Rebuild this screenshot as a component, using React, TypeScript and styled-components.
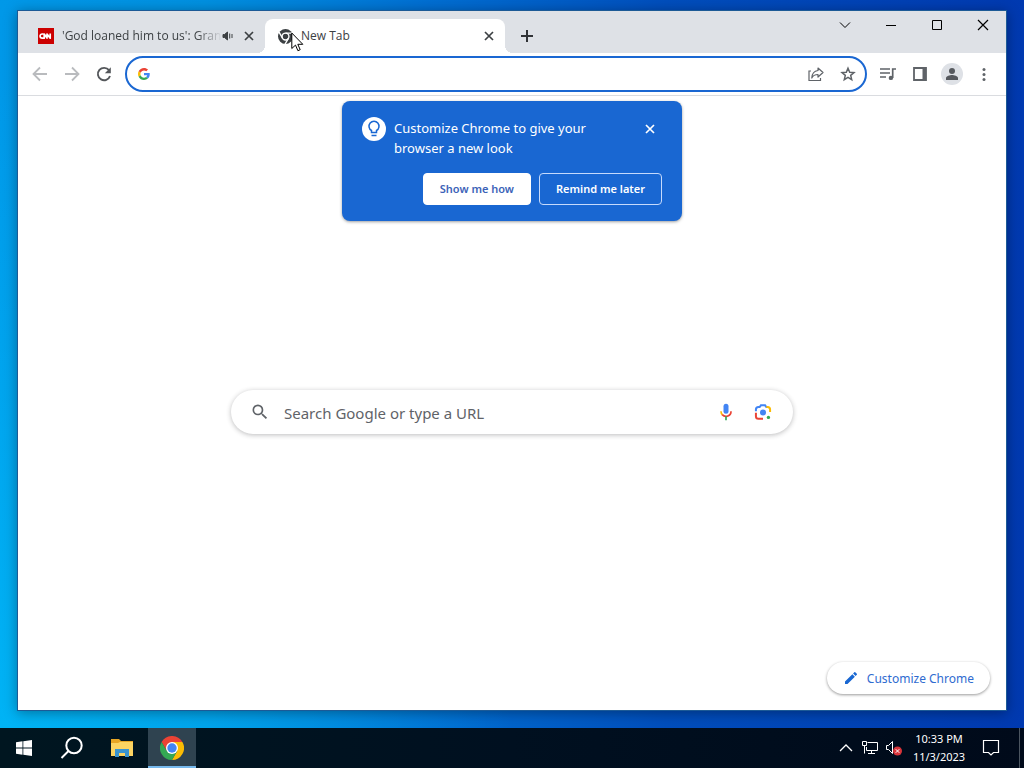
import React from 'react';
import styled, { createGlobalStyle } from 'styled-components';

const Global = createGlobalStyle`
  *, *::before, *::after { box-sizing: border-box; }
  body { margin: 0; font-family: "Open Sans", "Noto Sans", sans-serif; color: #3c4043; }
  button { font: inherit; color: inherit; border: 0; padding: 0; margin: 0; background: none; }
  svg { display: block; flex: none; }
`;

const Desktop = styled.div`
  position: relative;
  display: flex;
  flex-direction: column;
  min-height: 100vh;
  background:
    radial-gradient(ellipse 50% 90% at 0% 100%, rgba(0, 200, 255, 0.6), rgba(0, 200, 255, 0)),
    linear-gradient(90deg, #0098e8 0%, #0090e0 20%, #006ed2 42%, #004ebc 65%, #0039b0 100%);
`;

const BrowserWindow = styled.main`
  flex: 1;
  display: flex;
  flex-direction: column;
  margin: 10px 17px 17px;
  border: 1px solid #1c5a96;
  background: #fff;
  box-shadow: 0 2px 12px rgba(0, 0, 0, 0.35);
`;

const TabStrip = styled.header`
  display: flex;
  height: 42px;
  padding-left: 7px;
  background: #dee1e6;
`;

const Tab = styled.div<{ $active?: boolean }>`
  position: relative;
  display: flex;
  align-items: center;
  align-self: flex-end;
  width: 240px;
  height: 34px;
  padding: 0 8px 0 13px;
  border-radius: 8px 8px 0 0;
  background: ${p => (p.$active ? '#fff' : 'transparent')};
  font-size: 12px;
  &::before, &::after {
    content: '';
    display: ${p => (p.$active ? 'block' : 'none')};
    position: absolute;
    bottom: 0;
    width: 8px;
    height: 8px;
  }
  &::before { right: 100%; background: radial-gradient(circle at 0 0, transparent 8px, #fff 8px); }
  &::after { left: 100%; background: radial-gradient(circle at 100% 0, transparent 8px, #fff 8px); }
`;

const TabTitle = styled.span<{ $fade?: boolean }>`
  flex: 1;
  min-width: 0;
  margin-left: 8px;
  overflow: hidden;
  white-space: nowrap;
  line-height: 16px;
  mask-image: ${p => (p.$fade ? 'linear-gradient(90deg, #000 84%, transparent)' : 'none')};
`;

const SpeakerIcon = styled.svg`
  margin-right: 7px;
`;

const IconButton = styled.button<{ $w?: number; $h?: number }>`
  display: flex;
  align-items: center;
  justify-content: center;
  flex: none;
  width: ${p => p.$w ?? 32}px;
  height: ${p => p.$h ?? 32}px;
`;

const NewTab = styled(IconButton)`
  align-self: flex-end;
  margin-left: 7px;
`;

const WindowControls = styled.div`
  display: flex;
  margin-left: auto;
  color: #000;
`;

const Toolbar = styled.nav`
  display: flex;
  align-items: center;
  height: 43px;
  padding: 0 6px;
  border-bottom: 1px solid #dadce0;
  color: #5f6368;
`;

const Omnibox = styled.label`
  display: flex;
  flex: 1;
  align-items: center;
  height: 36px;
  margin: 0 5px;
  padding: 0 1px 0 11px;
  border: 2px solid #1a67d2;
  border-radius: 18px;
`;

const TextInput = styled.input<{ $size: number }>`
  flex: 1;
  min-width: 0;
  border: 0;
  outline: 0;
  padding: 2px 0 0;
  background: none;
  font-family: "Noto Sans", "Open Sans", sans-serif;
  font-size: ${p => p.$size}px;
  color: #3c4043;
  &::placeholder { color: #5f6368; opacity: 1; }
`;

const Avatar = styled.span`
  display: flex;
  align-items: center;
  justify-content: center;
  width: 22px;
  height: 22px;
  border-radius: 50%;
  background: #dee1e6;
`;

const Page = styled.section`
  flex: 1;
  display: flex;
  flex-direction: column;
  align-items: center;
  padding: 5px 16px 16px;
`;

const Promo = styled.aside`
  display: flex;
  flex-direction: column;
  justify-content: space-between;
  width: 340px;
  height: 120px;
  padding: 16px 20px;
  border-radius: 8px;
  background: #1967d2;
  color: #fff;
  font-family: "Noto Sans", "Open Sans", sans-serif;
  box-shadow: 0 1px 3px rgba(60, 64, 67, 0.5);
`;

const PromoHead = styled.div`
  display: flex;
  gap: 8px;
`;

const BulbBadge = styled.span`
  display: flex;
  align-items: center;
  justify-content: center;
  width: 24px;
  height: 24px;
  border-radius: 50%;
  background: #fff;
  color: #1967d2;
`;

const PromoText = styled.p`
  flex: 1;
  margin: 1px 0 0;
  padding-right: 24px;
  font-size: 13px;
  line-height: 20px;
`;

const PromoActions = styled.div`
  display: flex;
  justify-content: flex-end;
  gap: 8px;
`;

const PromoButton = styled.button<{ $filled?: boolean }>`
  height: 32px;
  padding: 0 16px 2px;
  border: 1px solid ${p => (p.$filled ? '#fff' : '#c6dafc')};
  border-radius: 4px;
  background: ${p => (p.$filled ? '#fff' : 'transparent')};
  color: ${p => (p.$filled ? '#3c63b8' : '#fff')};
  font-size: 11px;
  font-weight: 600;
`;

const SearchBox = styled.label`
  display: flex;
  align-items: center;
  width: 100%;
  max-width: 562px;
  height: 44px;
  margin-top: 169px;
  padding: 0 12px 0 19px;
  border-radius: 22px;
  background: #fff;
  box-shadow: 0 1px 5px rgba(32, 33, 36, 0.3);
  gap: 14px;
`;

const SearchActions = styled.span`
  display: flex;
  gap: 1px;
`;

const CustomizeButton = styled.button`
  display: flex;
  align-items: center;
  gap: 8px;
  height: 32px;
  margin-top: auto;
  align-self: flex-end;
  padding: 0 16px;
  border-radius: 16px;
  background: #fff;
  color: #2f6bd0;
  font-family: "Noto Sans", "Open Sans", sans-serif;
  font-size: 12px;
  box-shadow: 0 1px 3px rgba(0, 0, 0, 0.4);
`;

const Taskbar = styled.footer`
  display: flex;
  align-items: stretch;
  height: 40px;
  background: linear-gradient(90deg, #001620, #001020 50%, #000a1a);
  color: #fff;
`;

const TaskButton = styled.button<{ $active?: boolean }>`
  display: flex;
  align-items: center;
  justify-content: center;
  width: 48px;
  background: ${p => (p.$active ? '#2f4350' : 'transparent')};
  box-shadow: ${p => (p.$active ? 'inset 0 -2px #76b9ed' : 'none')};
`;

const TaskGroup = styled.div`
  display: flex;
  gap: 2px;
  padding-left: 2px;
`;

const Tray = styled.div`
  display: flex;
  align-items: center;
  margin-left: auto;
`;

const Clock = styled.time`
  width: 66px;
  font-family: "Noto Sans", "Open Sans", sans-serif;
  font-size: 11px;
  line-height: 18px;
  text-align: center;
  white-space: nowrap;
`;

const ShowDesktop = styled.button`
  align-self: stretch;
  width: 5px;
  margin-left: 9px;
  border-left: 1px solid #4b5560;
`;

const Pointer = styled.svg`
  position: absolute;
  left: 291px;
  top: 32px;
`;

const Close = () => (
  <svg width="16" height="16" viewBox="0 0 16 16" fill="none" stroke="currentColor" strokeWidth="1.7">
    <path d="M4 4l8 8M12 4l-8 8" />
  </svg>
);

const GoogleG = () => (
  <svg width="12" height="12" viewBox="0 0 48 48">
    <path fill="#EA4335" d="M24 9.500c3.500 0 6.700 1.200 9.200 3.600l6.900-6.900C35.900 2.400 30.500 0 24 0 14.600 0 6.500 5.400 2.600 13.200l8 6.200C12.400 13.700 17.700 9.500 24 9.500z" />
    <path fill="#4285F4" d="M47 24.600c0-1.600-.2-3.100-.4-4.600H24v9h12.900c-.6 3-2.200 5.500-4.700 7.200l7.700 6C44.400 38 47 31.800 47 24.600z" />
    <path fill="#FBBC05" d="M10.500 28.600c-.5-1.500-.8-3-.8-4.600s.3-3.100.8-4.600l-8-6.200C.9 16.500 0 20.100 0 24s.9 7.500 2.600 10.800l7.900-6.200z" />
    <path fill="#34A853" d="M24 48c6.500 0 11.900-2.100 15.900-5.800l-7.700-6c-2.200 1.500-4.900 2.300-8.200 2.300-6.300 0-11.600-4.200-13.500-9.900l-8 6.200C6.500 42.600 14.600 48 24 48z" />
  </svg>
);

const ChromeLogo = () => (
  <svg width="24" height="24" viewBox="0 0 24 24">
    <path fill="#EA4335" d="M1.600 6L6.800 15 12 6h10.400A12 12 0 0 0 1.600 6z" />
    <path fill="#FBBC04" d="M22.400 6H12l5.200 9L12 24A12 12 0 0 0 22.400 6z" />
    <path fill="#34A853" d="M12 24l5.200-9H6.800L1.600 6A12 12 0 0 0 12 24z" />
    <circle cx="12" cy="12" r="6" fill="#fff" />
    <circle cx="12" cy="12" r="4.700" fill="#4285F4" />
  </svg>
);

const ChromeMono = () => (
  <svg width="15" height="15" viewBox="0 0 24 24">
    <circle cx="12" cy="12" r="12" fill="#3c4043" />
    <g fill="none" stroke="#fff" strokeWidth="2.200">
      <circle cx="12" cy="12" r="5.500" />
      <path d="M12 6.500h12M7.200 14.700L1.200 4.300M16.800 14.700l-6 10.400" />
    </g>
  </svg>
);

export default function App() {
  return (
    <Desktop>
      <Global />
      <BrowserWindow>
        <TabStrip>
          <Tab>
            <svg width="16" height="16" viewBox="0 0 16 16">
              <path fill="#c00" d="M0 0h16v16H0z" />
              <path d="M5.500 6H4.200a2 2 0 0 0 0 4.200H6.200V6l2.800 4V6l3.200 4.200V5.500" fill="none" stroke="#fff" strokeWidth="1.700" strokeLinejoin="round" />
            </svg>
            <TabTitle $fade>'God loaned him to us': Gran</TabTitle>
            <SpeakerIcon width="12" height="16" viewBox="2 0 12 16" fill="none" stroke="#3c4043">
              <path d="M3 6.500h1.500l3-2.500v8l-3-2.500H3z" fill="#3c4043" />
              <path d="M9.700 5.500v5M12 6v4" />
            </SpeakerIcon>
            <IconButton $w={16} $h={16} aria-label="Close tab"><Close /></IconButton>
          </Tab>
          <Tab $active>
            <ChromeMono />
            <TabTitle>New Tab</TabTitle>
            <IconButton $w={16} $h={16} aria-label="Close tab"><Close /></IconButton>
          </Tab>
          <NewTab $w={30} $h={34} aria-label="New tab">
            <svg width="16" height="16" viewBox="0 0 16 16" stroke="#303236" strokeWidth="2"><path d="M2 8h12M8 2v12" /></svg>
          </NewTab>
          <WindowControls>
            <IconButton $w={46} $h={28} aria-label="Search tabs">
              <svg width="12" height="12" viewBox="0 0 12 12" fill="none" stroke="currentColor"><path d="M1 3.500l5 5 5-5" /></svg>
            </IconButton>
            <IconButton $w={46} $h={28} aria-label="Minimize">
              <svg width="12" height="12" viewBox="0 0 12 12" stroke="currentColor"><path d="M1 6.500h10" /></svg>
            </IconButton>
            <IconButton $w={46} $h={28} aria-label="Maximize">
              <svg width="12" height="12" viewBox="0 0 12 12" fill="none" stroke="currentColor"><path d="M1.500 1.500h9v9h-9z" /></svg>
            </IconButton>
            <IconButton $w={46} $h={28} aria-label="Close">
              <svg width="12" height="12" viewBox="0 0 12 12" stroke="currentColor" strokeWidth="1.200"><path d="M1 1l10 10M11 1L1 11" /></svg>
            </IconButton>
          </WindowControls>
        </TabStrip>

        <Toolbar>
          <IconButton aria-label="Back">
            <svg width="16" height="16" viewBox="0 0 16 16" fill="none" stroke="#b9bbbe" strokeWidth="1.800"><path d="M15 8H2M8 1.500L1.500 8 8 14.500" /></svg>
          </IconButton>
          <IconButton aria-label="Forward">
            <svg width="16" height="16" viewBox="0 0 16 16" fill="none" stroke="#b9bbbe" strokeWidth="1.800"><path d="M1 8h13M8 1.500L14.500 8 8 14.500" /></svg>
          </IconButton>
          <IconButton aria-label="Reload">
            <svg width="16" height="16" viewBox="0 0 16 16" fill="none" stroke="#54575b" strokeWidth="1.900"><path d="M13 4.200A6.200 6.200 0 1 0 14 10" /><path d="M14.800 1.200v6H8.800z" fill="#54575b" stroke="none" /></svg>
          </IconButton>
          <Omnibox>
            <GoogleG />
            <TextInput $size={14} aria-label="Address and search bar" />
            <IconButton type="button" aria-label="Share">
              <svg width="16" height="16" viewBox="0 0 16 16" fill="none" stroke="currentColor" strokeWidth="1.200"><path d="M3 5H1v9.500h11.500V12" /><path d="M10 2l5 4.500-5 4.500V8.500C7 8.500 5 9.500 3.800 12 4 8 6 5 10 4.500z" strokeLinejoin="round" /></svg>
            </IconButton>
            <IconButton type="button" aria-label="Bookmark">
              <svg width="16" height="16" viewBox="0 0 16 16" fill="none" stroke="currentColor" strokeWidth="1.500"><path d="M8 2.200l1.700 4 4.300.4-3.300 2.800 1 4.300L8 11.400l-3.700 2.300 1-4.300L2 6.600l4.300-.4z" /></svg>
            </IconButton>
          </Omnibox>
          <IconButton aria-label="Media controls">
            <svg width="18" height="16" viewBox="0 0 18 16" fill="none" stroke="currentColor" strokeWidth="1.700"><path d="M1 3h10M1 7h10M1 11h6M13.700 12V3H17" /><circle cx="11.900" cy="11.900" r="2.200" fill="currentColor" stroke="none" /></svg>
          </IconButton>
          <IconButton aria-label="Side panel">
            <svg width="16" height="16" viewBox="0 0 16 16" fill="none" stroke="currentColor" strokeWidth="1.800"><path d="M2 2h12v12H2z" /><path d="M10.500 2H14v12h-3.500z" fill="currentColor" stroke="none" /></svg>
          </IconButton>
          <IconButton aria-label="Profile">
            <Avatar><svg width="14" height="14" viewBox="0 0 14 14" fill="#56595e"><circle cx="7" cy="4" r="3" /><path d="M1 13v-2c0-2 4-3 6-3s6 1 6 3v2z" /></svg></Avatar>
          </IconButton>
          <IconButton aria-label="Menu">
            <svg width="4" height="16" viewBox="0 0 4 16" fill="currentColor"><circle cx="2" cy="3.500" r="1.500" /><circle cx="2" cy="8.500" r="1.500" /><circle cx="2" cy="13.500" r="1.500" /></svg>
          </IconButton>
        </Toolbar>

        <Page>
          <Promo>
            <PromoHead>
              <BulbBadge>
                <svg width="18" height="18" viewBox="0 0 18 18" fill="none" stroke="currentColor" strokeWidth="1.500"><path d="M6.500 12.500v-2a5 5 0 1 1 5 0v2zM6.500 15.500h5" /></svg>
              </BulbBadge>
              <PromoText>Customize Chrome to give your browser a new look</PromoText>
              <IconButton $w={24} $h={24} aria-label="Dismiss"><Close /></IconButton>
            </PromoHead>
            <PromoActions>
              <PromoButton $filled>Show me how</PromoButton>
              <PromoButton>Remind me later</PromoButton>
            </PromoActions>
          </Promo>

          <SearchBox>
            <svg width="20" height="20" viewBox="0 0 24 24" fill="#5f6368"><path d="M15.500 14h-.79l-.28-.27A6.470 6.470 0 0 0 16 9.500 6.500 6.500 0 1 0 9.500 16c1.610 0 3.090-.59 4.230-1.570l.27.28v.79l5 4.990L20.490 19l-4.990-5zm-6 0C7.010 14 5 11.990 5 9.500S7.010 5 9.500 5 14 7.010 14 9.500 11.990 14 9.500 14z" /></svg>
            <TextInput $size={15} placeholder="Search Google or type a URL" aria-label="Search" />
            <SearchActions>
              <IconButton $w={36} type="button" aria-label="Search by voice">
                <svg width="20" height="20" viewBox="0 0 24 24" fill="none" strokeWidth="2"><path fill="#4285f4" d="M12 2a3 3 0 0 0-3 3v6a3 3 0 0 0 6 0V5a3 3 0 0 0-3-3z" /><path stroke="#fbbc04" d="M6 11c0 2 .7 3.300 1.800 4.400" /><path stroke="#ea4335" d="M7.500 15.200A6 6 0 0 0 18 11" /><path stroke="#34a853" d="M12 17v5" /></svg>
              </IconButton>
              <IconButton $w={36} type="button" aria-label="Search by image">
                <svg width="20" height="20" viewBox="0 0 24 24" fill="none" strokeWidth="2.400"><path stroke="#4285f4" d="M3.500 11V9a3 3 0 0 1 3-3H8l1.500-2h5L16 6h1" /><path stroke="#fbbc04" d="M16 6h1.500a3 3 0 0 1 3 3v3" /><path stroke="#ea4335" d="M3.500 13v4a3 3 0 0 0 3 3H12" /><circle cx="12" cy="12.500" r="3.600" fill="#4285f4" /><circle cx="18.500" cy="18.500" r="2" fill="#34a853" /></svg>
              </IconButton>
            </SearchActions>
          </SearchBox>

          <CustomizeButton>
            <svg width="16" height="16" viewBox="0 0 24 24" fill="#1967d2"><path d="M3 17.250V21h3.750L17.810 9.940l-3.750-3.750L3 17.250zM20.710 7.040a1 1 0 0 0 0-1.410l-2.340-2.340a1 1 0 0 0-1.410 0l-1.830 1.830 3.750 3.750 1.830-1.830z" /></svg>
            Customize Chrome
          </CustomizeButton>
        </Page>
      </BrowserWindow>

      <Taskbar>
        <TaskButton aria-label="Start">
          <svg width="16" height="16" viewBox="0 0 16 16" fill="#fff"><path d="M0 2.200l6.500-.9v6.300H0zM7.300 1.200L16 0v7.600H7.300zM0 8.400h6.500v6.300L0 13.800zM7.300 8.400H16V16l-8.700-1.200z" /></svg>
        </TaskButton>
        <TaskButton aria-label="Search">
          <svg width="24" height="24" viewBox="0 0 24 24" fill="none" stroke="#fff" strokeWidth="2"><circle cx="14" cy="9.500" r="7.700" /><path d="M8.500 15L1.500 22" /></svg>
        </TaskButton>
        <TaskGroup>
          <TaskButton aria-label="File Explorer">
            <svg width="22" height="18" viewBox="0 0 22 18"><path fill="#e8a624" d="M0 0h8l2 2h12v4H0z" /><path fill="#fcd462" d="M0 4h7l2-1h13v14H0z" /><path fill="#3a94cf" d="M4 10h14v8h-4v-4H8v4H4z" /></svg>
          </TaskButton>
          <TaskButton $active aria-label="Google Chrome"><ChromeLogo /></TaskButton>
        </TaskGroup>
        <Tray>
          <IconButton $w={24} aria-label="Show hidden icons">
            <svg width="14" height="14" viewBox="0 0 14 14" fill="none" stroke="#fff" strokeWidth="1.300"><path d="M1 10l6-6 6 6" /></svg>
          </IconButton>
          <IconButton $w={24} aria-label="Network">
            <svg width="16" height="16" viewBox="0 0 16 16" fill="none" stroke="#fff"><path d="M5.500 2.500h10v8h-11V7M.5 1.500h4v4h-4zM2.500 5.500v8M9.500 10.500v3M6 13.500h7" /></svg>
          </IconButton>
          <IconButton $w={24} aria-label="Volume muted">
            <svg width="16" height="16" viewBox="0 0 16 16" fill="none" stroke="#fff"><path d="M.5 5.500h2l4-4v12l-4-4h-2z" /><circle cx="11.500" cy="11" r="4.500" fill="#d9343a" stroke="none" /><path d="M9.700 9.200l3.600 3.600M13.300 9.200l-3.600 3.600" /></svg>
          </IconButton>
          <Clock>10:33 PM<br />11/3/2023</Clock>
          <IconButton $w={38} aria-label="Notifications">
            <svg width="18" height="18" viewBox="0 0 18 18" fill="none" stroke="#fff" strokeWidth="1.200"><path d="M1.500 1.500h15v12h-5L9 16l-2.500-2.500h-5z" /></svg>
          </IconButton>
          <ShowDesktop aria-label="Show desktop" />
        </Tray>
      </Taskbar>

      <Pointer width="13" height="20" viewBox="0 0 13 20"><path d="M.8 1v15.500l3.700-3.400 2.400 5.600 2.300-1-2.400-5.400h5z" fill="#fff" stroke="#000" /></Pointer>
    </Desktop>
  );
}
